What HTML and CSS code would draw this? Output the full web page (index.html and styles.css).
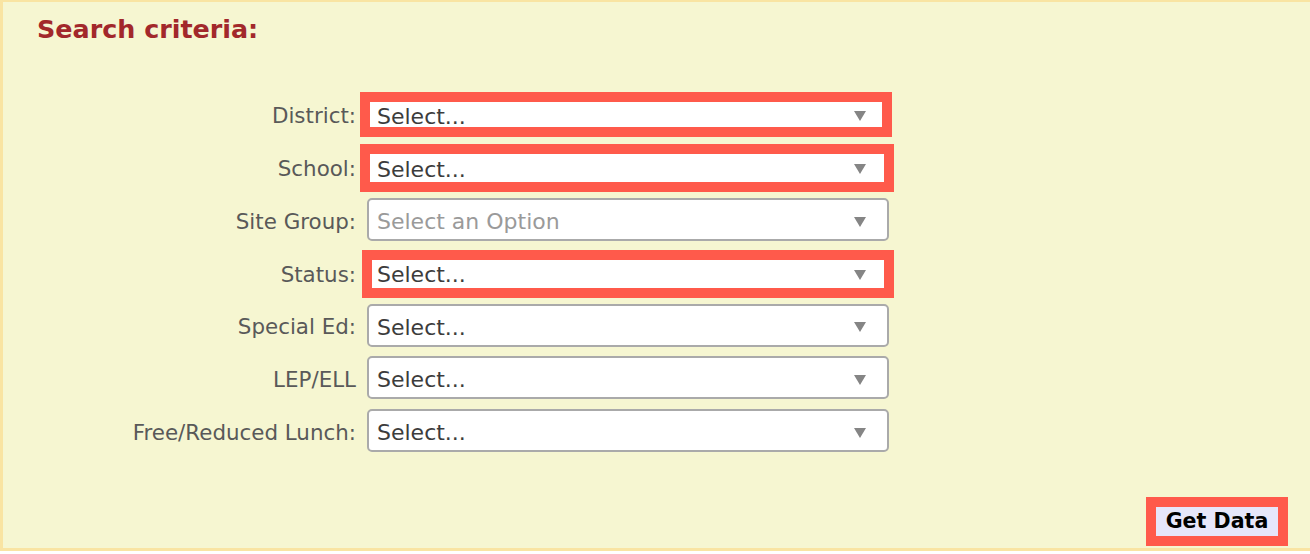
FILE: index.html
```html
<!DOCTYPE html>
<html lang="en">
<head>
<meta charset="utf-8">
<title>Search criteria</title>
<link rel="stylesheet" href="styles.css">
</head>
<body>
<section class="panel">
  <h2 class="title">Search criteria:</h2>
  <div class="form">
    <label class="label">District:</label>
    <div class="field flag flag-district"><div class="select"><span class="value">Select...</span><span class="arrow"></span></div></div>

    <label class="label">School:</label>
    <div class="field flag flag-school"><div class="select"><span class="value">Select...</span><span class="arrow"></span></div></div>

    <label class="label">Site Group:</label>
    <div class="field"><div class="select"><span class="value placeholder">Select an Option</span><span class="arrow"></span></div></div>

    <label class="label">Status:</label>
    <div class="field flag flag-status"><div class="select"><span class="value">Select...</span><span class="arrow"></span></div></div>

    <label class="label">Special Ed:</label>
    <div class="field"><div class="select"><span class="value">Select...</span><span class="arrow"></span></div></div>

    <label class="label">LEP/ELL</label>
    <div class="field"><div class="select"><span class="value">Select...</span><span class="arrow"></span></div></div>

    <label class="label">Free/Reduced Lunch:</label>
    <div class="field"><div class="select"><span class="value">Select...</span><span class="arrow"></span></div></div>
  </div>
  <div class="actions">
    <button class="btn" type="button">Get Data</button>
  </div>
</section>
</body>
</html>
```

FILE: styles.css
```css
html, body {
  margin: 0;
  padding: 0;
  background: #ffffff;
}

body {
  font-family: "DejaVu Sans", Verdana, sans-serif;
}

.panel {
  box-sizing: border-box;
  width: 1310px;
  height: 551px;
  background: #f6f6d1;
  border: 2px solid #f9e4a2;
  border-left-width: 3px;
  border-bottom-width: 3px;
  border-right: 0;
  padding-top: 11.65px;
}

.title {
  margin: 0;
  padding-left: 34px;
  font-size: 25.4px;
  line-height: 30px;
  font-weight: bold;
  color: #a2282b;
}

.form {
  margin-top: 44.5px;
  display: grid;
  grid-template-columns: 353px 522px;
  grid-auto-rows: 52.7px;
  column-gap: 11px;
  align-items: center;
}

.label {
  text-align: right;
  white-space: nowrap;
  font-size: 21.4px;
  color: #595959;
  padding-top: 3px;
}

.field {
  position: relative;
}

.select {
  box-sizing: border-box;
  height: 43px;
  background: #ffffff;
  border: 2px solid #aaaaaa;
  border-radius: 5px;
  display: flex;
  align-items: center;
  padding: 4px 21px 0 8px;
}

.value {
  font-size: 22px;
  color: #3c3c3c;
  white-space: nowrap;
}

.value.placeholder {
  color: #9a9a9a;
}

.arrow {
  margin-left: auto;
  width: 0;
  height: 0;
  border-left: 6.5px solid transparent;
  border-right: 6.5px solid transparent;
  border-top: 10px solid #858585;
}

/* red annotation frames drawn over the flagged selects */
.flag::after {
  content: "";
  position: absolute;
  border: 10px solid #ff5a4b;
  pointer-events: none;
}

.flag-district::after {
  top: -1px;
  bottom: -1px;
  left: -7px;
  right: -3px;
}

.flag-school::after {
  top: -1.7px;
  bottom: -3.3px;
  left: -7px;
  right: -5px;
}

.flag-status::after {
  top: -1px;
  bottom: -4px;
  left: -5px;
  right: -5px;
}

.actions {
  margin-top: 49.95px;
  display: flex;
  justify-content: flex-end;
  padding-right: 32px;
}

.btn {
  box-sizing: border-box;
  height: 29px;
  width: 122px;
  padding: 0;
  margin: 0;
  border: 0;
  background: #e6e6fa;
  outline: 10px solid #ff5a4b;
  font-family: "DejaVu Sans", Verdana, sans-serif;
  font-weight: bold;
  font-size: 20.6px;
  line-height: 29px;
  color: #000000;
}
```
